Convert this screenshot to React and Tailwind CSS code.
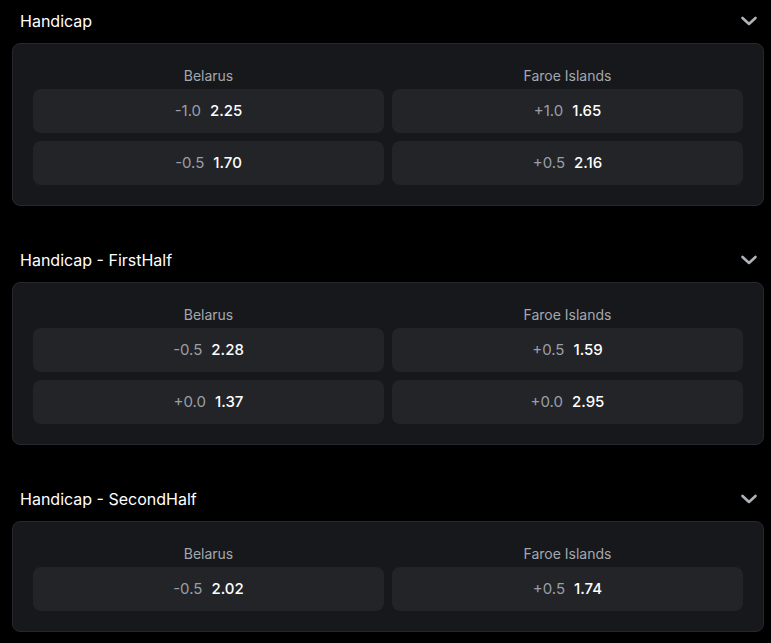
import React from 'react';

const MARKETS = [
  {
    title: 'Handicap',
    rows: [
      [{ line: '-1.0', odd: '2.25' }, { line: '+1.0', odd: '1.65' }],
      [{ line: '-0.5', odd: '1.70' }, { line: '+0.5', odd: '2.16' }],
    ],
  },
  {
    title: 'Handicap - FirstHalf',
    rows: [
      [{ line: '-0.5', odd: '2.28' }, { line: '+0.5', odd: '1.59' }],
      [{ line: '+0.0', odd: '1.37' }, { line: '+0.0', odd: '2.95' }],
    ],
  },
  {
    title: 'Handicap - SecondHalf',
    rows: [[{ line: '-0.5', odd: '2.02' }, { line: '+0.5', odd: '1.74' }]],
  },
];

function Chevron() {
  return (
    <svg width="24" height="24" viewBox="0 0 24 24" fill="none" stroke="#aeb3ba" strokeWidth="2.6" strokeLinecap="round" strokeLinejoin="round">
      <path d="m5.5 9 6.5 6 6.5-6" />
    </svg>
  );
}

function OddButton({ line, odd }) {
  return (
    <button className="h-11 rounded-lg bg-[#222428] flex items-center justify-center gap-[9px] text-[15px]">
      <span className="text-[#9a9fa7]">{line}</span>
      <span className="text-white font-medium">{odd}</span>
    </button>
  );
}

function Market({ title, rows }) {
  return (
    <section>
      <div className="h-[43px] flex items-center justify-between pl-2 pr-[3px] pb-[1px]">
        <span className="text-white text-base">{title}</span>
        <Chevron />
      </div>
      <div className="rounded-lg border border-[#26282c] bg-[#17181b] px-5 pt-[22px] pb-5">
        <div className="grid grid-cols-2 gap-2 mb-[3px]">
          <div className="text-center text-sm leading-5 text-[#a3a8af]">Belarus</div>
          <div className="text-center text-sm leading-5 text-[#a3a8af]">Faroe Islands</div>
        </div>
        <div className="flex flex-col gap-2">
          {rows.map((row, i) => (
            <div key={i} className="grid grid-cols-2 gap-2">
              {row.map((cell, j) => (
                <OddButton key={j} {...cell} />
              ))}
            </div>
          ))}
        </div>
      </div>
    </section>
  );
}

export default function App() {
  return (
    <div className="min-h-screen bg-black pl-3 pr-[7px] flex flex-col gap-[33px]" style={{ fontFamily: 'Inter, "Noto Sans", sans-serif' }}>
      {MARKETS.map((m) => (
        <Market key={m.title} {...m} />
      ))}
    </div>
  );
}
